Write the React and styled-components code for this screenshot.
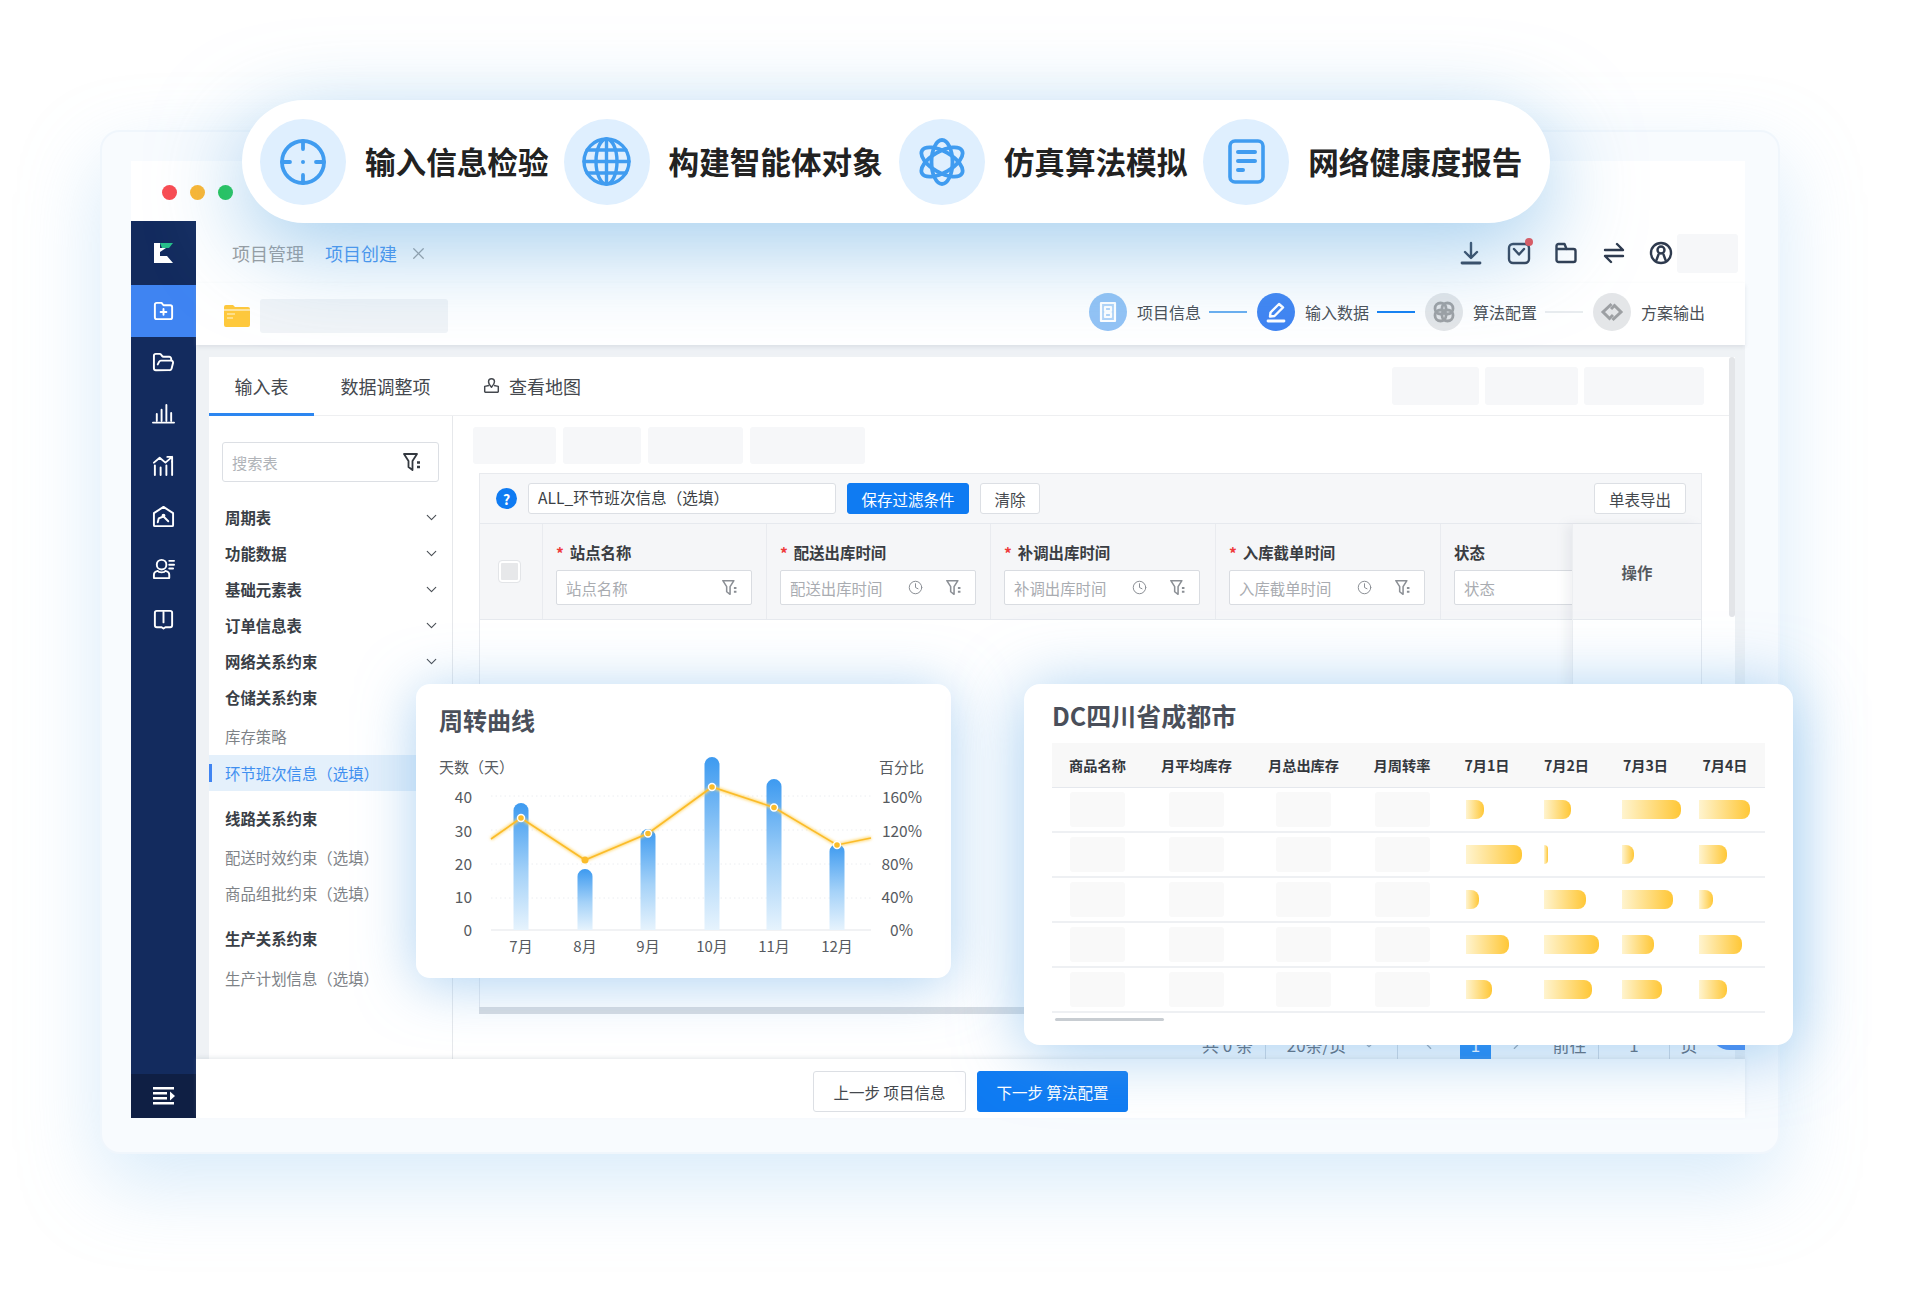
import React from 'react';
import styled, { createGlobalStyle } from 'styled-components';
import { FolderOpen, Clock, X, ChevronDown, ChevronLeft, ChevronRight } from 'lucide-react';

const FONT = `"Noto Sans CJK SC", "Noto Sans", sans-serif`;

const Global = createGlobalStyle`
  html, body { margin: 0; padding: 0; background: #fff; }
  * { box-sizing: border-box; }
  body { font-family: ${FONT}; }
`;

const Page = styled.div`
  position: relative;
  width: 1908px;
  height: 1292px;
  padding: 130px 0 0 100px;
  overflow: hidden;
  background: #fff;
`;
const Frame = styled.div`
  width: 1680px;
  height: 1024px;
  padding: 29px 33px 34px 29px;
  border: 2px solid #f0f6fc;
  border-radius: 20px;
  background: #f8fbfe;
  box-shadow: 0 30px 80px rgba(140, 195, 240, 0.34);
`;
const AppWin = styled.div`
  width: 1614px;
  height: 957px;
  background: #fff;
  display: flex;
  flex-direction: column;
`;
const TitleBar = styled.div`
  height: 60px;
  flex: none;
  display: flex;
  align-items: center;
  gap: 13px;
  padding-left: 31px;
`;
const Light = styled.span`
  width: 15px;
  height: 15px;
  border-radius: 50%;
  background: ${p => p.$c};
  margin-top: 2px;
`;
const Body = styled.div`
  flex: 1;
  display: flex;
  min-height: 0;
`;
const Sidebar = styled.nav`
  width: 65px;
  flex: none;
  background: #132b5e;
  display: flex;
  flex-direction: column;
`;
const LogoBox = styled.div`
  height: 64px;
  display: flex;
  align-items: center;
  justify-content: center;
`;
const SideItem = styled.div`
  height: ${p => p.$h || 51.5}px;
  display: flex;
  align-items: center;
  justify-content: center;
  background: ${p => (p.$active ? '#3f84f2' : 'transparent')};
  color: #fff;
  svg { display: block; }
`;
const SideFoot = styled.div`
  margin-top: auto;
  height: 44px;
  background: #0f1f44;
  display: flex;
  align-items: center;
  justify-content: center;
`;
const Main = styled.div`
  flex: 1;
  min-width: 0;
  display: flex;
  flex-direction: column;
`;
const Crumbs = styled.div`
  height: 62px;
  flex: none;
  display: flex;
  align-items: center;
  padding: 2px 7px 0 36px;
`;
const Crumb = styled.span`
  font-size: 18px;
  color: ${p => (p.$on ? '#3f8ff0' : '#9b9b9b')};
  margin-right: ${p => p.$mr}px;
`;
const ToolIcons = styled.div`
  margin-left: auto;
  display: flex;
  align-items: center;
  color: #2e3a4e;
`;
const ToolBtn = styled.span`
  position: relative;
  width: 47.5px;
  display: flex;
  justify-content: center;
  svg { display: block; }
`;
const RedDot = styled.i`
  position: absolute;
  top: -3px;
  right: 10px;
  width: 8px;
  height: 8px;
  border-radius: 50%;
  background: #ef4b4b;
`;
const Skeleton = styled.div`
  width: ${p => p.$w}px;
  height: ${p => p.$h}px;
  background: ${p => p.$c || '#f6f7f9'};
  border-radius: 3px;
  flex: none;
`;
const UserSkeleton = styled(Skeleton)`
  margin-left: -8px;
`;
const StepsRow = styled.div`
  height: 62px;
  flex: none;
  display: flex;
  align-items: center;
  padding: 0 32px 4px 28px;
  position: relative;
  z-index: 1;
  box-shadow: 0 2px 4px rgba(150, 160, 175, 0.22);
`;
const FolderWrap = styled.span`
  display: flex;
  margin-top: 7px;
`;
const NameSkeleton = styled(Skeleton)`
  margin-left: 10px;
  margin-top: 7px;
`;
const Steps = styled.div`
  margin-left: auto;
  display: flex;
  align-items: center;
`;
const StepDot = styled.span`
  width: 38px;
  height: 38px;
  border-radius: 50%;
  background: ${p => p.$c};
  display: flex;
  align-items: center;
  justify-content: center;
`;
const StepLabel = styled.span`
  font-size: 16px;
  color: #4a4f55;
  margin: 0 8px 0 10px;
`;
const StepLine = styled.span`
  width: 38px;
  height: 2px;
  background: ${p => p.$c};
  margin-right: 10px;
`;
const Content = styled.div`
  position: relative;
  flex: 1;
  min-height: 0;
  background: #eff2f5;
  padding: 12px 10px 0 13px;
`;
const Panel = styled.div`
  position: relative;
  height: 100%;
  background: #fff;
  display: flex;
  flex-direction: column;
`;
const PanelScroll = styled.div`
  position: absolute;
  top: 0;
  right: 0;
  width: 6px;
  height: 260px;
  border-radius: 3px;
  background: #e3e5e8;
`;
const TabBar = styled.div`
  height: 59px;
  flex: none;
  display: flex;
  align-items: center;
  border-bottom: 1px solid #eeeff1;
  padding-right: 31px;
`;
const Tab = styled.div`
  height: 59px;
  width: ${p => p.$w}px;
  display: flex;
  align-items: center;
  justify-content: center;
  gap: 9px;
  font-size: 18px;
  color: #44484e;
  border-bottom: 3px solid ${p => (p.$on ? '#2c86f0' : 'transparent')};
  padding-top: 2px;
`;
const TabRight = styled.div`
  margin-left: auto;
  display: flex;
  gap: 6px;
`;
const PanelBody = styled.div`
  flex: 1;
  min-height: 0;
  display: flex;
`;
const LeftCol = styled.aside`
  width: 244px;
  flex: none;
  border-right: 1px solid #e6e8eb;
  padding-top: 26px;
`;
const SearchBox = styled.div`
  width: 217px;
  height: 40px;
  margin: 0 0 17px 13px;
  border: 1px solid #dcdfe4;
  border-radius: 3px;
  display: flex;
  align-items: center;
  justify-content: space-between;
  padding: 0 15px 0 9px;
  font-size: 15.2px;
  color: #b0b3b8;
  svg { display: block; color: #33383f; }
`;
const MenuTitle = styled.div`
  height: 36px;
  display: flex;
  align-items: center;
  justify-content: space-between;
  padding: 0 12px 0 16px;
  font-size: 15.4px;
  font-weight: 700;
  color: #3a3f47;
  margin-top: ${p => p.$mt || 0}px;
  svg { color: #4a4f55; }
`;
const MenuItem = styled.div`
  position: relative;
  height: 36px;
  display: flex;
  align-items: center;
  padding-left: 16px;
  font-size: 15.4px;
  color: ${p => (p.$on ? '#3f8ff0' : '#7e8287')};
  background: ${p => (p.$on ? '#e4f0fb' : 'transparent')};
  margin-top: ${p => p.$mt || 0}px;
  &::before {
    content: '';
    display: ${p => (p.$on ? 'block' : 'none')};
    position: absolute;
    left: 0;
    top: 9px;
    width: 3px;
    height: 18px;
    background: #3f84f2;
  }
`;
const RightCol = styled.section`
  flex: 1;
  min-width: 0;
  padding-top: 11px;
`;
const TopSkeletons = styled.div`
  display: flex;
  gap: 7px;
  padding-left: 20px;
  margin-bottom: 9px;
`;
const TableBox = styled.div`
  position: relative;
  width: 1223px;
  height: 534px;
  margin-left: 26px;
  border: 1px solid #e8eaee;
  border-bottom: none;
  overflow: hidden;
`;
const FilterBar = styled.div`
  height: 50px;
  display: flex;
  align-items: center;
  gap: 11px;
  padding: 0 15px 0 16px;
  background: #f6f7f9;
  border-bottom: 1px solid #e6e9ee;
`;
const Help = styled.span`
  width: 21px;
  height: 21px;
  border-radius: 50%;
  background: #0f7bf2;
  color: #fff;
  font-size: 14px;
  font-weight: 700;
  display: flex;
  align-items: center;
  justify-content: center;
`;
const NameInput = styled.div`
  width: 308px;
  height: 31px;
  border: 1px solid #dcdfe4;
  border-radius: 3px;
  background: #fff;
  padding: 0 9px;
  font-size: 15.6px;
  line-height: 27px;
  color: #3b3f45;
`;
const Btn = styled.div`
  width: ${p => p.$w}px;
  height: ${p => p.$h || 31}px;
  flex: none;
  border: 1px solid ${p => (p.$primary ? '#0f7bf2' : '#dcdfe4')};
  border-radius: 3px;
  background: ${p => (p.$primary ? '#0f7bf2' : '#fff')};
  color: ${p => (p.$primary ? '#fff' : '#44484e')};
  font-size: 15.5px;
  display: flex;
  align-items: center;
  justify-content: center;
`;
const PushRight = styled(Btn)`
  margin-left: auto;
`;
const HeadRow = styled.div`
  display: grid;
  grid-template-columns: 63px 224px 224px 225px 225px 262px;
  height: 96px;
  background: #f5f6f8;
  border-bottom: 1px solid #e6e9ee;
`;
const HeadCell = styled.div`
  border-right: 1px solid #e9ebef;
  padding: 18px 0 0 13px;
  overflow: hidden;
`;
const CheckCell = styled(HeadCell)`
  padding: 0 3px 0 0;
  display: flex;
  align-items: center;
  justify-content: center;
`;
const CheckBox = styled.span`
  width: 21px;
  height: 21px;
  border: 2px solid #fff;
  outline: 1px solid #e3e5e8;
  border-radius: 3px;
  background: #e7e8ea;
`;
const FieldLabel = styled.div`
  height: 20px;
  line-height: 20px;
  font-size: 15.4px;
  font-weight: 700;
  color: #3a3d42;
  margin-bottom: 8px;
`;
const Star = styled.span`
  color: #ef3b3b;
  margin-right: 6px;
`;
const FieldInput = styled.div`
  width: 196px;
  height: 35px;
  border: 1px solid #d9dce1;
  border-radius: 2px;
  background: #fff;
  display: flex;
  align-items: center;
  padding: 0 12px 0 9px;
  font-size: 15.4px;
  color: #a9acb1;
  svg { display: block; color: #8b8f95; flex: none; }
`;
const FieldText = styled.span`
  flex: 1;
`;
const ClockWrap = styled.span`
  margin-right: 23px;
  display: flex;
`;
const OpColumn = styled.div`
  position: absolute;
  top: 50px;
  right: 0;
  bottom: 0;
  width: 129px;
  background: #fff;
  border-left: 1px solid #eceef1;
  box-shadow: -6px 0 10px rgba(120, 130, 145, 0.1);
`;
const OpHead = styled.div`
  height: 96px;
  background: #f5f6f8;
  border-bottom: 1px solid #e6e9ee;
  display: flex;
  align-items: center;
  justify-content: center;
  font-size: 15.4px;
  font-weight: 700;
  color: #55595f;
`;
const HScroll = styled.div`
  width: 1223px;
  height: 7px;
  margin-left: 26px;
  background: #d8dce1;
`;
const Pager = styled.div`
  height: 45px;
  display: flex;
  padding-left: 737px;
  color: #5d6168;
  font-size: 17px;
`;
const PagerCell = styled.div`
  width: ${p => p.$w}px;
  display: flex;
  align-items: flex-end;
  justify-content: center;
  gap: 16px;
  padding-bottom: 2px;
  margin-top: 15px;
  border-right: ${p => (p.$sep ? '1px solid #d5dae0' : 'none')};
  background: ${p => (p.$on ? '#1480f3' : 'transparent')};
  color: ${p => (p.$on ? '#fff' : 'inherit')};
  svg { margin-bottom: 5px; color: #9aa0a8; }
`;
const HelpBlob = styled.div`
  position: absolute;
  right: 0;
  top: 665px;
  width: 35px;
  height: 40px;
  background: #3f84f2;
  border-radius: 20px 0 0 20px;
`;
const Footer = styled.footer`
  height: 59px;
  flex: none;
  position: relative;
  z-index: 1;
  display: flex;
  justify-content: center;
  align-items: center;
  gap: 11px;
  padding-top: 6px;
  background: #fff;
  box-shadow: 0 -2px 4px rgba(150, 160, 175, 0.2);
`;

/* ---------- overlays ---------- */
const Pill = styled.div`
  position: absolute;
  left: 242px;
  top: 100px;
  width: 1308px;
  height: 123px;
  border-radius: 62px;
  background: #fff;
  display: flex;
  align-items: center;
  padding-left: 18px;
  box-shadow: 0 24px 90px rgba(105, 175, 228, 0.62);
  z-index: 5;
`;
const PillDisc = styled.span`
  width: 86px;
  height: 86px;
  flex: none;
  border-radius: 50%;
  background: #dfeffe;
  display: flex;
  align-items: center;
  justify-content: center;
`;
const PillText = styled.span`
  font-size: 30.6px;
  font-weight: 700;
  color: #222;
  margin: -2px ${p => p.$mr}px 0 19px;
  white-space: nowrap;
`;
const ChartCard = styled.div`
  position: absolute;
  left: 416px;
  top: 684px;
  width: 535px;
  height: 294px;
  border-radius: 14px;
  background: #fff;
  box-shadow: 0 6px 56px rgba(110, 175, 232, 0.56);
  z-index: 4;
`;
const ChartTitle = styled.h3`
  height: 61px;
  margin: 0;
  padding: 19px 0 0 23px;
  font-size: 24px;
  line-height: 34px;
  font-weight: 700;
  color: #4a4f5a;
`;
const ChartSvg = styled.svg`
  display: block;
  text {
    font-family: ${FONT};
    font-size: 15px;
    fill: #565a60;
  }
`;
const TableCard = styled.div`
  position: absolute;
  left: 1024px;
  top: 684px;
  width: 769px;
  height: 361px;
  border-radius: 16px;
  background: #fff;
  box-shadow: 0 6px 66px rgba(100, 170, 230, 0.6);
  z-index: 4;
  padding: 14px 28px 0;
`;
const TableTitle = styled.h3`
  margin: 0 0 11px;
  height: 34px;
  font-size: 25px;
  line-height: 34px;
  font-weight: 700;
  color: #4a4f5a;
`;
const DataGrid = styled.div`
  display: grid;
  grid-template-columns: 91px 107px 107px 90px 80px 79px 79px 80px;
  grid-auto-rows: 45px;
`;
const DataHead = styled.div`
  height: 45px;
  background: #f8f8f8;
  border-bottom: 1px solid #e5e8ed;
  display: flex;
  align-items: center;
  justify-content: center;
  font-size: 14.2px;
  font-weight: 700;
  color: #33373d;
`;
const DataCell = styled.div`
  border-bottom: 2px solid #eef0f3;
  display: flex;
  align-items: center;
  justify-content: ${p => (p.$bar ? 'flex-start' : 'center')};
  padding-left: ${p => p.$pad || 0}px;
`;
const HeatBar = styled.span`
  display: block;
  height: 19px;
  border-radius: 0 8px 8px 0;
  background: linear-gradient(90deg, #fff4cf 0%, #ffc736 100%);
`;
const ThinScroll = styled.div`
  width: 109px;
  height: 3px;
  margin: 5px 0 0 3px;
  border-radius: 2px;
  background: #c8cdd2;
`;

/* ---------- drawings ---------- */
const Logo = () => (
  <svg width="20" height="21" viewBox="0 0 20 21">
    <path d="M0 0h6v13h7l6 7H0z" fill="#fff" />
    <path d="M6 0h13l-4 5H8z" fill="#27c08a" />
    <path d="M6 9l6-4-6 0z" fill="#fff" />
  </svg>
);
const sideProps = { width: 23, height: 23, viewBox: '0 0 24 24', fill: 'none', stroke: '#fff', strokeWidth: 2, strokeLinecap: 'round', strokeLinejoin: 'round' };
const IcoFolderPlus = () => (
  <svg {...sideProps}>
    <path d="M3 6a2 2 0 0 1 2-2h5l2 2.500h7a2 2 0 0 1 2 2V19a2 2 0 0 1-2 2H5a2 2 0 0 1-2-2z" />
    <path d="M12 10.500v6M9 13.500h6" />
  </svg>
);
const IcoBars = () => (
  <svg {...sideProps}>
    <path d="M1 21.500h22M5 19.500v-7M10 19.500V8M15 19.500V3M20 19.500v-8" />
  </svg>
);
const IcoTrend = () => (
  <svg {...sideProps}>
    <path d="M3 22V12M9 22v-8M15 22V12M21 22V8" />
    <path d="M2 9l6-5 6 5 7-6M16 3h5v5" />
  </svg>
);
const IcoHouse = () => (
  <svg {...sideProps}>
    <path d="M2 8.500L12 2l10 6.500V21a1 1 0 0 1-1 1H3a1 1 0 0 1-1-1z" />
    <path d="M6 18l1-4 5-2 5 5" />
    <circle cx="12" cy="11" r="1" fill="#fff" />
  </svg>
);
const IcoUser = () => (
  <svg {...sideProps}>
    <circle cx="10" cy="8" r="5" />
    <path d="M2 22v-3.500C2 16 4 15 6 14.500c1 2 7 2 8 0 2 .5 4 1.500 4 4V22z" />
    <path d="M18 4h5M18 8h5M18 12h4" />
  </svg>
);
const IcoBook = () => (
  <svg {...sideProps}>
    <path d="M3 5a2 2 0 0 1 2-2h14a2 2 0 0 1 2 2v13a2 2 0 0 1-2 2h-5l-2 1.500L10 20H5a2 2 0 0 1-2-2z" />
    <path d="M12 4v11" />
  </svg>
);
const IcoMenu = () => (
  <svg width="22" height="18" viewBox="0 0 22 18" fill="#fff">
    <rect x="0" y="0" width="21" height="2.500" />
    <rect x="0" y="5" width="14" height="2.500" />
    <rect x="0" y="10" width="14" height="2.500" />
    <rect x="0" y="15" width="21" height="2.500" />
    <path d="M17 4.500l5 4.500-5 4.500z" />
  </svg>
);
const toolProps = { width: 24, height: 24, viewBox: '0 0 24 24', fill: 'none', stroke: 'currentColor', strokeWidth: 2.400, strokeLinecap: 'round', strokeLinejoin: 'round' };
const IcoDownload = () => (
  <svg {...toolProps}>
    <path d="M12 2v14M6 11l6 6 6-6" />
    <path d="M3 22h18" strokeWidth="2.800" />
  </svg>
);
const IcoMail = () => (
  <svg {...toolProps}>
    <rect x="2" y="3" width="20" height="19" rx="4" />
    <path d="M7 8l5 5.500L17 8" />
  </svg>
);
const IcoFolder = () => (
  <svg {...toolProps}>
    <path d="M2.500 5a2 2 0 0 1 2-2h6l2 5h7a2 2 0 0 1 2 2v9a2 2 0 0 1-2 2h-15a2 2 0 0 1-2-2z" />
    <path d="M3 8h9" />
  </svg>
);
const IcoSwap = () => (
  <svg {...toolProps}>
    <path d="M3 9h18L15 3M21 15H3l6 6" />
  </svg>
);
const IcoProfile = () => (
  <svg {...toolProps}>
    <circle cx="12" cy="12" r="10" />
    <circle cx="12" cy="9" r="3.500" />
    <path d="M7.500 19l2-5.500M16.500 19l-2-5.500" />
  </svg>
);
const IcoFunnel = ({ s = 18 }) => (
  <svg width={s} height={s} viewBox="0 0 20 20" fill="none" stroke="currentColor" strokeWidth="1.800" strokeLinejoin="round">
    <path d="M1 2h13L9.500 9v9l-4-3V9z" />
    <path d="M14 10.500h3M14 15h3" strokeWidth="2.400" />
  </svg>
);
const IcoFolderColor = () => (
  <svg width="26" height="22" viewBox="0 0 26 22">
    <path d="M0 2a2 2 0 0 1 2-2h7l2 2h13a2 2 0 0 1 2 2v16a2 2 0 0 1-2 2H2a2 2 0 0 1-2-2z" fill="#ffc93c" />
    <path d="M0 5h26" stroke="#fff" strokeWidth="1" />
    <path d="M3 9h8M3 13h6" stroke="#ffe7a3" strokeWidth="1.300" />
  </svg>
);
const IcoPin = () => (
  <svg width="17" height="17" viewBox="0 0 20 20" fill="none" stroke="#44484e" strokeWidth="1.700" strokeLinejoin="round">
    <path d="M2 18V11l5-1M18 18v-7l-5-1M2 18h16" />
    <path d="M10 2a3.500 3.500 0 0 1 3.500 3.500C13.500 8 10 12 10 12S6.500 8 6.500 5.500A3.500 3.500 0 0 1 10 2z" />
  </svg>
);
const stepSvg = { width: 24, height: 24, viewBox: '0 0 24 24', fill: 'none', strokeLinecap: 'round', strokeLinejoin: 'round' };
const StepInfo = () => (
  <svg {...stepSvg} stroke="#fff" strokeWidth="2.200">
    <rect x="5" y="3" width="14" height="18" fill="#fff" fillOpacity="0.3" />
    <rect x="9" y="7" width="6" height="4" />
    <rect x="9" y="13" width="6" height="4" />
  </svg>
);
const StepEdit = () => (
  <svg {...stepSvg} stroke="#fff" strokeWidth="2.400">
    <path d="M6 16.500l.5-4L15 4l4 3.500-8.500 8.500z" />
    <path d="M4 21h16" strokeWidth="2.800" />
  </svg>
);
const StepAlgo = () => (
  <svg {...stepSvg} stroke="#9da0a3" strokeWidth="2.800">
    <circle cx="8.500" cy="8.500" r="5.500" />
    <circle cx="15.500" cy="8.500" r="5.500" />
    <circle cx="8.500" cy="15.500" r="5.500" />
    <circle cx="15.500" cy="15.500" r="5.500" />
  </svg>
);
const StepOut = () => (
  <svg {...stepSvg} stroke="#9da0a3" strokeWidth="3" strokeLinecap="butt" strokeLinejoin="miter">
    <path d="M11.500 4L3 12l6.500 6.500 3.500-3.500" />
    <path d="M12.500 20l8.500-8-6.500-6.500L11 9" />
  </svg>
);
const blue = { fill: 'none', stroke: '#409cf0', strokeLinecap: 'round', strokeLinejoin: 'round' };
const PillTarget = () => (
  <svg width="46" height="46" viewBox="0 0 46 46" {...blue} strokeWidth="3.800">
    <circle cx="23" cy="23" r="21" />
    <path d="M23 2v8M23 36v8M2 23h8M36 23h8" />
    <circle cx="23" cy="23" r="1" fill="#409cf0" strokeWidth="2" />
  </svg>
);
const PillGlobe = () => (
  <svg width="49" height="49" viewBox="0 0 49 49" {...blue} strokeWidth="3.400">
    <circle cx="24.500" cy="24.500" r="22.500" />
    <ellipse cx="24.500" cy="24.500" rx="10.500" ry="22.500" />
    <path d="M24.500 2v45M2 24.500h45M5 13h39M5 36h39" />
  </svg>
);
const PillAtom = () => (
  <svg width="48" height="48" viewBox="0 0 48 48" {...blue} strokeWidth="3.800">
    <ellipse cx="24" cy="24" rx="23" ry="10.500" transform="rotate(30 24 24)" />
    <ellipse cx="24" cy="24" rx="23" ry="10.500" transform="rotate(-30 24 24)" />
    <ellipse cx="24" cy="24" rx="10.500" ry="22" />
  </svg>
);
const PillDoc = () => (
  <svg width="37" height="45" viewBox="0 0 37 45" {...blue} strokeWidth="3.600">
    <rect x="2" y="2" width="33" height="41" rx="5" />
    <path d="M10 13h17M10 22h17M10 31h5" strokeWidth="4" />
  </svg>
);

/* ---------- data ---------- */
const barTops = [
  { x: 521, top: 802, label: '7月' },
  { x: 585, top: 868, label: '8月' },
  { x: 648, top: 828, label: '9月' },
  { x: 712, top: 756, label: '10月' },
  { x: 774, top: 778, label: '11月' },
  { x: 837, top: 843, label: '12月' },
];
const BASE = 929;
const linePts = [[491, 838], [521, 817], [585, 859], [648, 832.5], [712, 786], [774, 806.5], [837, 844], [871, 837]];

const barPath = (x, top) => `M${x - 7.5} ${BASE}V${top + 7.5}a7.500 7.500 0 0 1 15 0V${BASE}z`;

const Chart = () => (
  <ChartSvg width="535" height="233" viewBox="416 744 535 233">
    <defs>
      <linearGradient id="barFill" x1="0" y1="0" x2="0" y2="1">
        <stop offset="0" stopColor="#3d9af0" />
        <stop offset="0.55" stopColor="#a5d2f8" />
        <stop offset="1" stopColor="#e6f3fd" />
      </linearGradient>
      <filter id="glow" x="-5%" y="-20%" width="110%" height="140%">
        <feGaussianBlur stdDeviation="1.800" />
      </filter>
    </defs>
    <text x="439" y="772">天数（天）</text>
    <text x="879" y="772">百分比</text>
    {[795, 829, 863, 897].map(y => (
      <line key={y} x1="491" x2="871" y1={y} y2={y} stroke="#eceef1" strokeDasharray="1.500 3" />
    ))}
    <line x1="491" x2="871" y1={BASE} y2={BASE} stroke="#e3e5e9" strokeWidth="1.200" />
    {barTops.map(b => (
      <path key={b.x} d={barPath(b.x, b.top)} fill="url(#barFill)" />
    ))}
    {[['40', 802], ['30', 836], ['20', 869], ['10', 902], ['0', 935]].map(([t, y]) => (
      <text key={t} x="472" y={y} textAnchor="end" style={{ fontSize: 15.5 }}>{t}</text>
    ))}
    {[['160%', 922, 802], ['120%', 922, 836], ['80%', 913, 869], ['40%', 913, 902], ['0%', 913, 935]].map(([t, x, y]) => (
      <text key={t} x={x} y={y} textAnchor="end" style={{ fontSize: 15.5 }}>{t}</text>
    ))}
    {barTops.map(b => (
      <text key={b.label} x={b.x} y="951" textAnchor="middle">{b.label}</text>
    ))}
    <polyline points={linePts.map(p => p.join(',')).join(' ')} fill="none" stroke="#ffd66b" strokeWidth="3" filter="url(#glow)" />
    <polyline points={linePts.map(p => p.join(',')).join(' ')} fill="none" stroke="#fbbc2a" strokeWidth="1.600" />
    {linePts.slice(1, -1).map(([x, y]) => (
      <circle key={x} cx={x} cy={y} r="3.500" fill="#fbbc2a" stroke="#fff" strokeWidth={x === 585 ? 0 : 1.400} />
    ))}
  </ChartSvg>
);

const FIELDS = [
  { label: '站点名称', req: true },
  { label: '配送出库时间', req: true, time: true },
  { label: '补调出库时间', req: true, time: true },
  { label: '入库截单时间', req: true, time: true },
  { label: '状态', open: true },
];
const GROUP_TOP = ['周期表', '功能数据', '基础元素表', '订单信息表', '网络关系约束'];
const HEADS = ['商品名称', '月平均库存', '月总出库存', '月周转率', '7月1日', '7月2日', '7月3日', '7月4日'];
const HEAT = [
  [18, 27, 59, 51],
  [56, 4, 12, 28],
  [13, 42, 51, 14],
  [43, 55, 32, 43],
  [26, 48, 40, 28],
];
const PADS = [19, 17, 16, 14];

export default function App() {
  return (
    <Page>
      <Global />
      <Frame>
        <AppWin>
          <TitleBar>
            <Light $c="#f94c52" />
            <Light $c="#fdb62f" />
            <Light $c="#1fc551" />
          </TitleBar>
          <Body>
            <Sidebar>
              <LogoBox><Logo /></LogoBox>
              <SideItem $active><IcoFolderPlus /></SideItem>
              <SideItem><FolderOpen size={23} strokeWidth={2} /></SideItem>
              <SideItem><IcoBars /></SideItem>
              <SideItem><IcoTrend /></SideItem>
              <SideItem><IcoHouse /></SideItem>
              <SideItem><IcoUser /></SideItem>
              <SideItem><IcoBook /></SideItem>
              <SideFoot><IcoMenu /></SideFoot>
            </Sidebar>
            <Main>
              <Crumbs>
                <Crumb $mr={21}>项目管理</Crumb>
                <Crumb $on $mr={12}>项目创建</Crumb>
                <X size={19} color="#9b9b9b" strokeWidth={1.600} />
                <ToolIcons>
                  <ToolBtn><IcoDownload /></ToolBtn>
                  <ToolBtn><IcoMail /><RedDot /></ToolBtn>
                  <ToolBtn><IcoFolder /></ToolBtn>
                  <ToolBtn><IcoSwap /></ToolBtn>
                  <ToolBtn><IcoProfile /></ToolBtn>
                  <UserSkeleton $w={61} $h={39} />
                </ToolIcons>
              </Crumbs>
              <StepsRow>
                <FolderWrap><IcoFolderColor /></FolderWrap>
                <NameSkeleton $w={188} $h={34} $c="#f1f4f7" />
                <Steps>
                  <StepDot $c="#93c3f5"><StepInfo /></StepDot>
                  <StepLabel>项目信息</StepLabel>
                  <StepLine $c="#6aaef0" />
                  <StepDot $c="#3f84f2"><StepEdit /></StepDot>
                  <StepLabel>输入数据</StepLabel>
                  <StepLine $c="#1480f3" />
                  <StepDot $c="#e4e6e8"><StepAlgo /></StepDot>
                  <StepLabel>算法配置</StepLabel>
                  <StepLine $c="#e9ecef" />
                  <StepDot $c="#e4e6e8"><StepOut /></StepDot>
                  <StepLabel>方案输出</StepLabel>
                </Steps>
              </StepsRow>
              <Content>
                <Panel>
                  <PanelScroll />
                  <TabBar>
                    <Tab $on $w={105}>输入表</Tab>
                    <Tab $w={143}>数据调整项</Tab>
                    <Tab $w={150}><IcoPin />查看地图</Tab>
                    <TabRight>
                      <Skeleton $w={87} $h={38} />
                      <Skeleton $w={93} $h={38} />
                      <Skeleton $w={120} $h={38} />
                    </TabRight>
                  </TabBar>
                  <PanelBody>
                    <LeftCol>
                      <SearchBox>搜索表<IcoFunnel s={20} /></SearchBox>
                      {GROUP_TOP.map(t => (
                        <MenuTitle key={t}>{t}<ChevronDown size={17} strokeWidth={1.600} /></MenuTitle>
                      ))}
                      <MenuTitle>仓储关系约束</MenuTitle>
                      <MenuItem $mt={3}>库存策略</MenuItem>
                      <MenuItem $mt={1} $on>环节班次信息（选填）</MenuItem>
                      <MenuTitle $mt={9}>线路关系约束</MenuTitle>
                      <MenuItem $mt={3}>配送时效约束（选填）</MenuItem>
                      <MenuItem>商品组批约束（选填）</MenuItem>
                      <MenuTitle $mt={9}>生产关系约束</MenuTitle>
                      <MenuItem $mt={4}>生产计划信息（选填）</MenuItem>
                    </LeftCol>
                    <RightCol>
                      <TopSkeletons>
                        <Skeleton $w={83} $h={37} />
                        <Skeleton $w={78} $h={37} />
                        <Skeleton $w={95} $h={37} />
                        <Skeleton $w={115} $h={37} />
                      </TopSkeletons>
                      <TableBox>
                        <FilterBar>
                          <Help>?</Help>
                          <NameInput>ALL_环节班次信息（选填）</NameInput>
                          <Btn $primary $w={122}>保存过滤条件</Btn>
                          <Btn $w={60}>清除</Btn>
                          <PushRight $w={92}>单表导出</PushRight>
                        </FilterBar>
                        <HeadRow>
                          <CheckCell><CheckBox /></CheckCell>
                          {FIELDS.map(f => (
                            <HeadCell key={f.label}>
                              <FieldLabel>{f.req && <Star>*</Star>}{f.label}</FieldLabel>
                              <FieldInput>
                                <FieldText>{f.label}</FieldText>
                                {f.time && <ClockWrap><Clock size={15} strokeWidth={1.600} /></ClockWrap>}
                                {!f.open && <IcoFunnel s={17} />}
                              </FieldInput>
                            </HeadCell>
                          ))}
                        </HeadRow>
                        <OpColumn><OpHead>操作</OpHead></OpColumn>
                      </TableBox>
                      <HScroll />
                      <Pager>
                        <PagerCell $w={76} $sep>共 0 条</PagerCell>
                        <PagerCell $w={132} $sep>20条/页<ChevronDown size={14} /></PagerCell>
                        <PagerCell $w={62}><ChevronLeft size={14} /></PagerCell>
                        <PagerCell $w={31} $on>1</PagerCell>
                        <PagerCell $w={50}><ChevronRight size={14} /></PagerCell>
                        <PagerCell $w={58} $sep>前往</PagerCell>
                        <PagerCell $w={71} $sep>1</PagerCell>
                        <PagerCell $w={38}>页</PagerCell>
                      </Pager>
                    </RightCol>
                  </PanelBody>
                </Panel>
                <HelpBlob />
              </Content>
              <Footer>
                <Btn $w={153} $h={41}>上一步 项目信息</Btn>
                <Btn $primary $w={151} $h={41}>下一步 算法配置</Btn>
              </Footer>
            </Main>
          </Body>
        </AppWin>
      </Frame>

      <Pill>
        <PillDisc><PillTarget /></PillDisc>
        <PillText $mr={15}>输入信息检验</PillText>
        <PillDisc><PillGlobe /></PillDisc>
        <PillText $mr={16}>构建智能体对象</PillText>
        <PillDisc><PillAtom /></PillDisc>
        <PillText $mr={16}>仿真算法模拟</PillText>
        <PillDisc><PillDoc /></PillDisc>
        <PillText $mr={0}>网络健康度报告</PillText>
      </Pill>

      <ChartCard>
        <ChartTitle>周转曲线</ChartTitle>
        <Chart />
      </ChartCard>

      <TableCard>
        <TableTitle>DC四川省成都市</TableTitle>
        <DataGrid>
          {HEADS.map(h => <DataHead key={h}>{h}</DataHead>)}
          {HEAT.map((row, r) => (
            <React.Fragment key={r}>
              {[0, 1, 2, 3].map(c => (
                <DataCell key={c}><Skeleton $w={55} $h={35} $c="#f9f9f9" /></DataCell>
              ))}
              {row.map((w, c) => (
                <DataCell key={c} $bar $pad={PADS[c]}>
                  <HeatBar style={{ width: w }} />
                </DataCell>
              ))}
            </React.Fragment>
          ))}
        </DataGrid>
        <ThinScroll />
      </TableCard>
    </Page>
  );
}
